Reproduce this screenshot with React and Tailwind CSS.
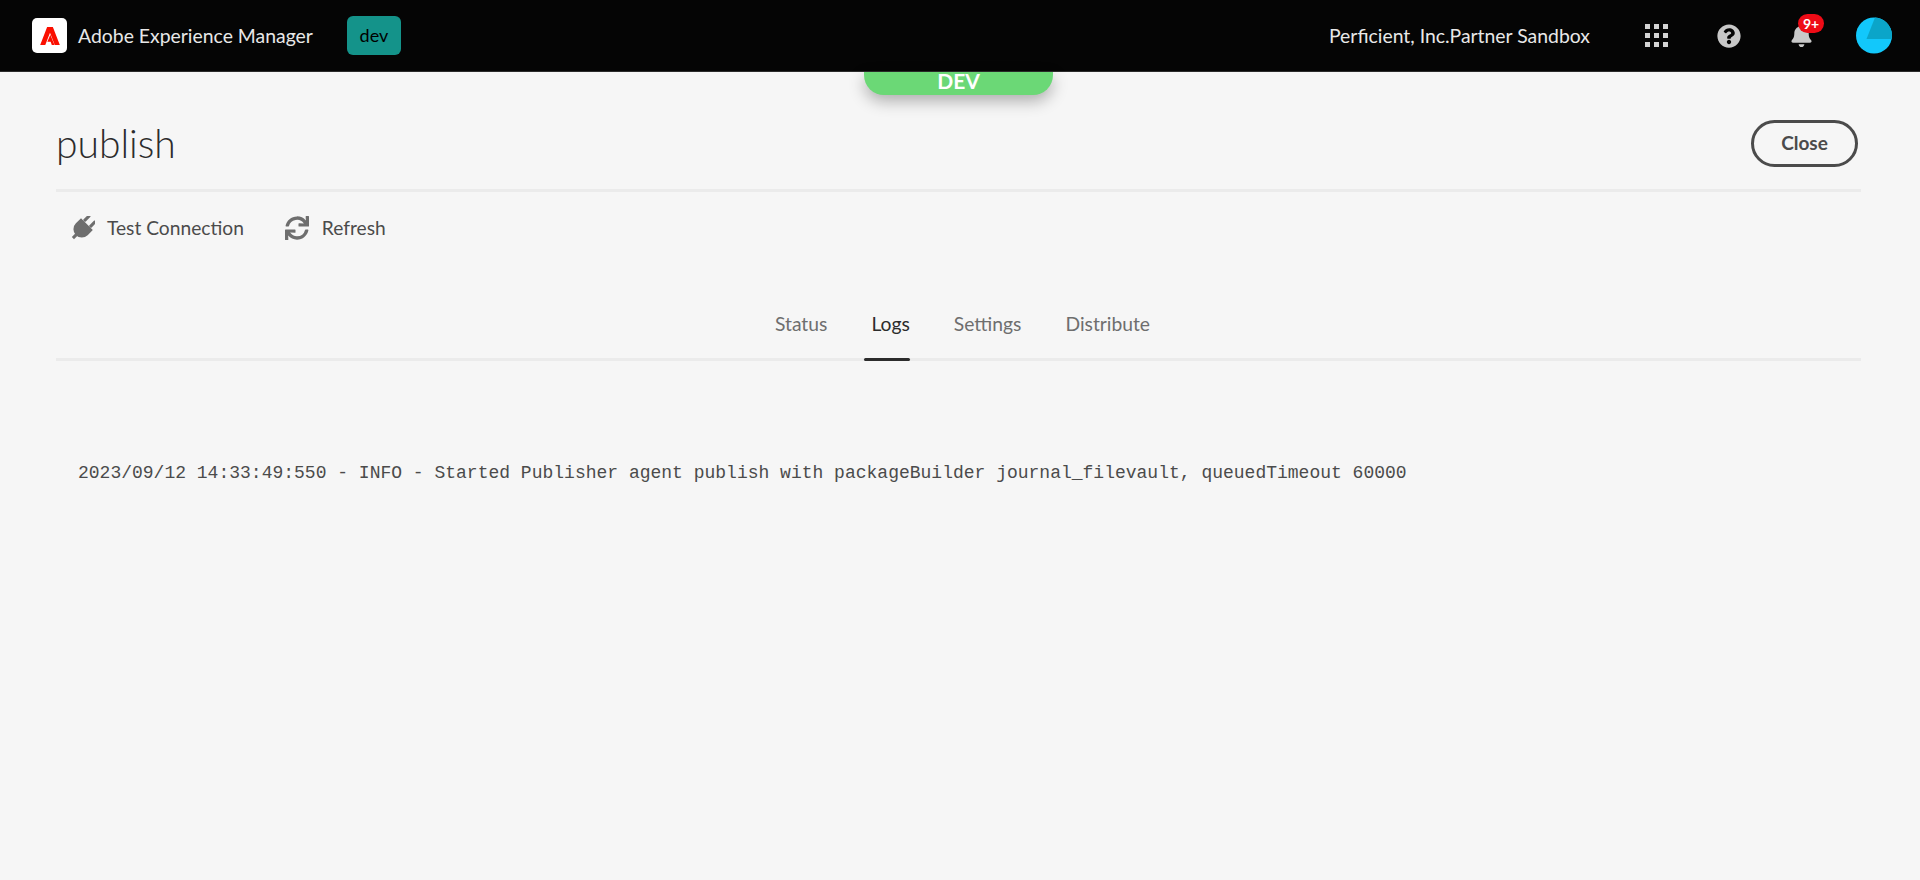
import React from "react";
import { FaBell, FaQuestionCircle, FaSync } from "react-icons/fa";

const AdobeLogo = () => (
  <svg viewBox="0 0 24 22" className="w-[20px] h-[18px]">
    <path fill="#fa0f00" d="M8.500 0H15.500L24 22H17.800L12 7 6.200 22H0Z" />
    <path fill="#fa0f00" d="M12.400 9.500 17.500 22H14.200L12.800 18H8.800Z" />
  </svg>
);

const AppsIcon = () => (
  <div className="grid grid-cols-3 gap-[4px] w-[23px]">
    {[1, 2, 3, 4, 5, 6, 7, 8, 9].map((n) => (
      <span key={n} className="w-[5px] h-[5px] bg-[#d4d4d4]"></span>
    ))}
  </div>
);

const Avatar = () => (
  <svg viewBox="0 0 36 36" className="w-[36px] h-[37px]">
    <circle cx="18" cy="18" r="18" fill="#12c8fb" />
    <path fill="#0ba5c9" d="M10.500 21.500 19 0A18 18 0 0 1 35.600 21.500Z" />
  </svg>
);

const PlugIcon = () => (
  <svg viewBox="0 0 24 24" className="w-[25px] h-[25px] text-[#6e6e6e]" fill="currentColor">
    <g transform="rotate(45 12 12)">
      <rect x="6.500" y="-2" width="3" height="8" rx="1" />
      <rect x="14.500" y="-2" width="3" height="8" rx="1" />
      <path d="M4 6H20V13A8 8 0 0 1 4 13Z" />
      <rect x="10.500" y="20" width="3" height="5" />
    </g>
  </svg>
);

const Header = () => (
  <header className="flex items-center justify-between h-[72px] bg-[#050505] border-b border-[#2c2c2c] pl-[32px] pr-[28px]">
    <div className="flex items-center">
      <div className="flex items-center justify-center w-[35px] h-[35px] bg-white rounded-[5px]">
        <AdobeLogo />
      </div>
      <span className="ml-[11px] text-[19.400px] text-[#e8e8e8]">Adobe Experience Manager</span>
      <div className="flex items-center justify-center ml-[34px] w-[54px] h-[39px] bg-[#14938a] rounded-[6px] text-[18px] text-black">
        dev
      </div>
    </div>
    <div className="flex items-center">
      <span className="text-[19.400px] text-[#e8e8e8]">Perficient, Inc.Partner Sandbox</span>
      <div className="ml-[55px]">
        <AppsIcon />
      </div>
      <FaQuestionCircle className="ml-[49px] text-[24px] text-[#c8c8c8]" />
      <div className="relative ml-[49px] w-[22px]">
        <FaBell className="text-[23px] text-[#c8c8c8]" />
        <span className="absolute -top-[10px] left-[8px] flex items-center justify-center w-[26px] h-[19px] rounded-full bg-[#ee0b16] text-[14px] font-bold text-white">
          9+
        </span>
      </div>
      <div className="ml-[44px]">
        <Avatar />
      </div>
    </div>
  </header>
);

const Toolbar = () => (
  <div className="flex items-center h-[72px] pl-[14px] text-[19.200px] text-[#4b4b4b]">
    <PlugIcon />
    <span className="ml-[12px]">Test Connection</span>
    <FaSync className="ml-[41px] text-[24px] text-[#6e6e6e]" />
    <span className="ml-[13px]">Refresh</span>
  </div>
);

const Tabs = () => (
  <div className="flex justify-center gap-[44px] h-[69px] mt-[28px] border-b-[3px] border-[#ebebeb] pl-[8px] text-[19.300px] text-[#6e6e6e]">
    <div className="pt-[18px]">Status</div>
    <div className="pt-[18px] text-[#2c2c2c] relative">
      Logs
      <span className="absolute -bottom-[3px] -left-[7px] w-[46px] h-[3px] bg-[#2c2c2c] rounded-[2px]"></span>
    </div>
    <div className="pt-[18px]">Settings</div>
    <div className="pt-[18px]">Distribute</div>
  </div>
);

export default function App() {
  return (
    <div className="relative h-[880px] bg-[#f6f6f6] overflow-hidden font-['Lato',sans-serif]">
      <Header />
      <div className="absolute top-[72px] left-[864px] flex items-start justify-center w-[189px] h-[23px] bg-[#6bd876] rounded-b-[20px] shadow-[0_6px_16px_rgba(0,0,0,0.3)] text-[21px] leading-[17px] font-bold text-white">
        DEV
      </div>
      <main className="pl-[56px] pr-[59px]">
        <div className="flex items-end justify-between h-[120px] pb-[21px] border-b-[3px] border-[#ebebeb]">
          <h1 className="text-[39px] leading-[50px] font-light text-[#2c2c2c]">publish</h1>
          <button className="w-[107px] h-[47px] mb-[1px] mr-[3px] border-[3px] border-[#4b4b4b] rounded-full text-[19px] font-bold text-[#4b4b4b]">
            Close
          </button>
        </div>
        <Toolbar />
        <Tabs />
        <pre className="mt-[100px] ml-[22px] text-[18px] leading-[24px] text-[#4b4b4b] font-['Liberation_Mono',monospace]">
          2023/09/12 14:33:49:550 - INFO - Started Publisher agent publish with packageBuilder journal_filevault, queuedTimeout 60000
        </pre>
      </main>
    </div>
  );
}
